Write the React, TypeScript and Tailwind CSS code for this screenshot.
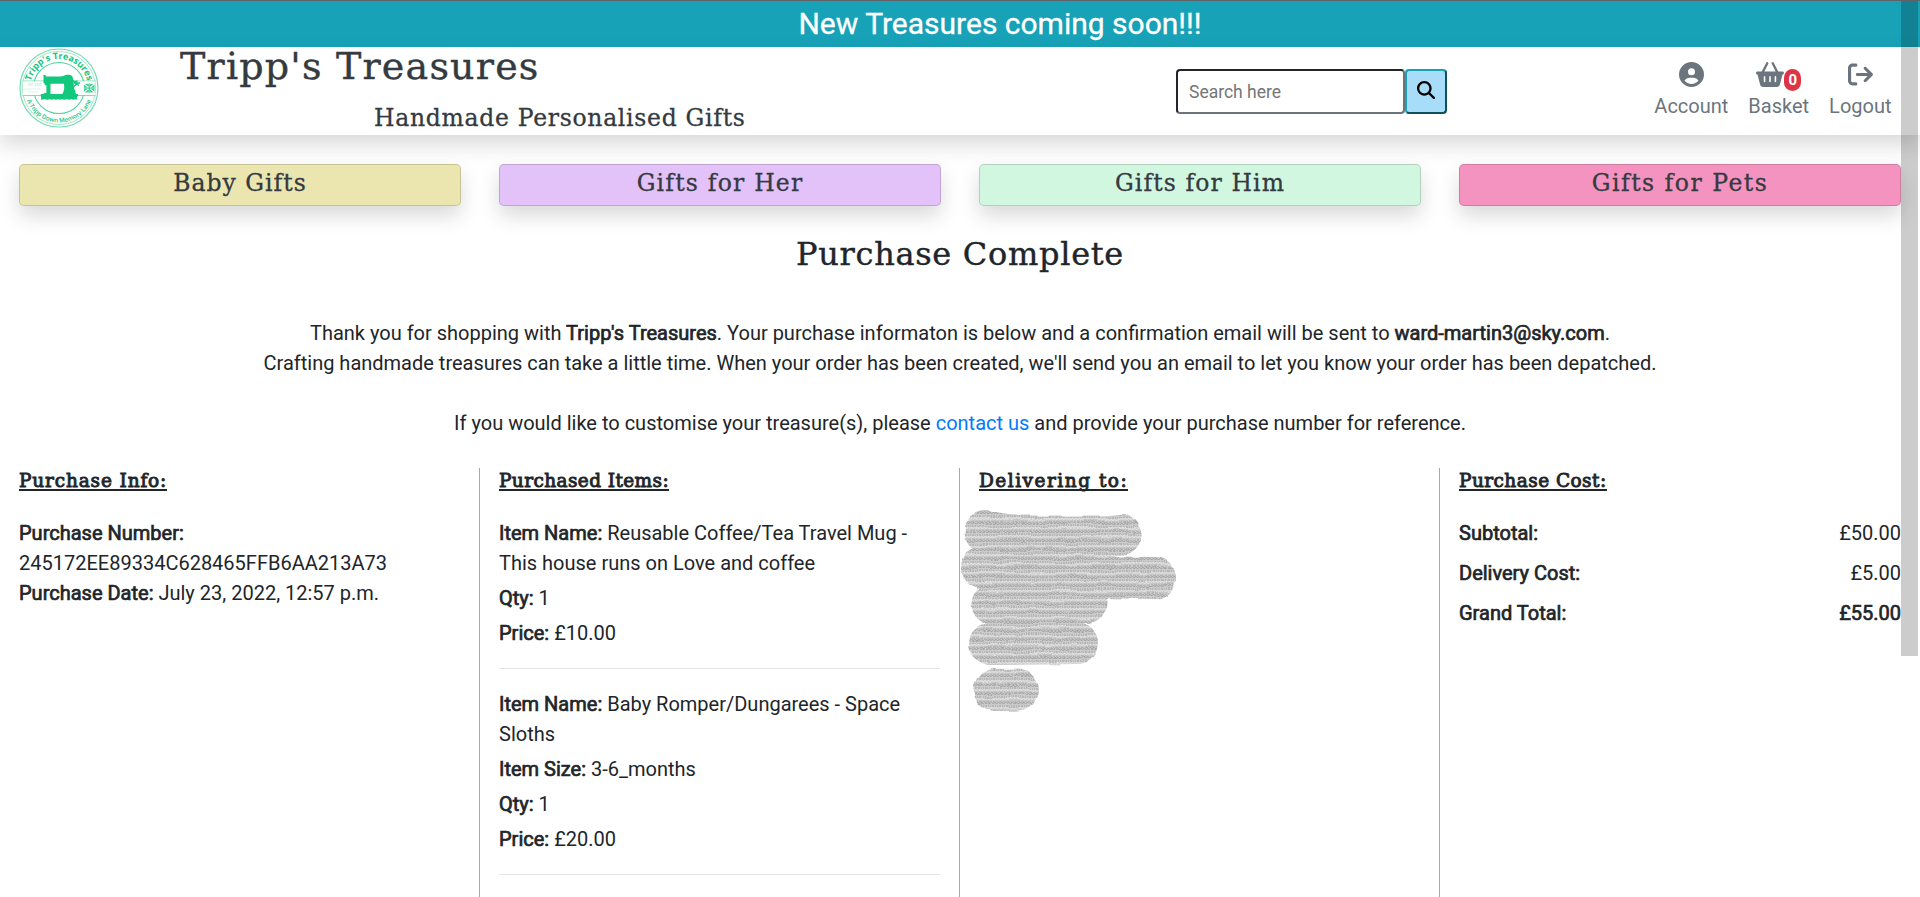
import type { ReactNode } from "react";
import { FaArrowRightFromBracket, FaBasketShopping, FaCircleUser, FaMagnifyingGlass } from "react-icons/fa6";

const typewriter = "font-['DejaVu_Serif',serif]";

function B({ children }: { children: ReactNode }) {
  return <span className="[-webkit-text-stroke:0.7px_#212529]">{children}</span>;
}

function Logo() {
  return (
    <svg viewBox="0 0 80 80" className="h-20 w-20" fill="none">
      <circle cx="40" cy="40" r="39" stroke="#6fdcae" strokeWidth="1.2" />
      <circle cx="40" cy="40" r="36.6" stroke="#8be3bf" strokeWidth="0.8" />
      <circle cx="40" cy="40" r="25.5" stroke="#4fd39b" strokeWidth="1.1" />
      <path d="M3.5 33h73M3.5 47.5h73" stroke="#6fdcae" strokeWidth="0.9" />
      <path d="M4 33.6h72v13.4H4z" fill="#fff" />
      <path id="arc-top" d="M11 40 A29 29 0 0 1 69 40" />
      <path id="arc-bottom" d="M5.500 40 A34.5 34.5 0 0 0 74.500 40" />
      <text fill="#14c67c" fontSize="9" fontWeight="700" className="font-['Open_Sans',sans-serif]">
        <textPath href="#arc-top" startOffset="50%" textAnchor="middle">Tripp's Treasures</textPath>
      </text>
      <text fill="#16c47c" fontSize="6.200" fontWeight="600" className="font-['Open_Sans',sans-serif]">
        <textPath href="#arc-bottom" startOffset="50%" textAnchor="middle">A Tripp Down Memory Lane</textPath>
      </text>
      <text x="9" y="37.5" fill="#8be3bf" fontSize="3" className="font-['Open_Sans',sans-serif]">EST. 2020</text>
      <path d="M5 41h17M9 44h11" stroke="#bff0db" strokeWidth="0.8" strokeDasharray="1.5 .6" />
      <path
        fill="#12c87c"
        d="M24.5 27h2.3v1.4h14.5c3 0 4-1.3 6-1.6 2.6-.4 5.4 0 6.2 1.9.5 1.2.4 2.4.8 4.4l.8 6.7c.3 2.4 1 4.4 2 6.2h2v2.4H21.8v-2.4h3V45h2.6v-7.7h-1.7v-2h-1.2zM31.5 35.8V46h11.8c1.6-2.5 2.4-5.5 1.7-10.2z"
        fillRule="evenodd"
      />
      <path fill="#12c87c" d="M22 47.5h36v4.3c-1.2-.9-2.6-.9-3.8 0-1.4-.9-3-.9-4.2 0-1.5-.9-3-.9-4.4 0-1.4-.9-3-.9-4.4 0-1.4-.9-2.8-.9-4.2 0-1.4-.9-3-.9-4.4 0-1.4-.9-2.8-.9-4.2 0-1.5-.9-4.3-.9-6.4 0z" />
      <path d="M53.5 31.5l2 2.5 3-1M54.5 35h6.5M55 38.5l2.4-2.5 2.6 1.5M54.5 42l2 1.5" stroke="#12c87c" strokeWidth="1.4" />
      <path fill="#3ad092" d="M65 35.8h10.5v8.6H65z" />
      <path d="M65 35.8l10.5 8.6M75.5 35.8L65 44.4M70.2 35.6v9M65 40.1h10.5" stroke="#fff" strokeWidth="1.1" />
      <path d="M70.2 35.6v9M65 40.1h10.5" stroke="#12c87c" strokeWidth="0.9" />
    </svg>
  );
}

const categories = [
  { label: "Baby Gifts", color: "bg-[#ebe6b0]", track: "tracking-[1px]" },
  { label: "Gifts for Her", color: "bg-[#e3c1f9]", track: "tracking-[1.2px]" },
  { label: "Gifts for Him", color: "bg-[#d2f7e1]", track: "tracking-[1.1px]" },
  { label: "Gifts for Pets", color: "bg-[#f593c0]", track: "tracking-[1.5px]" },
];

const items = [
  { name: "Reusable Coffee/Tea Travel Mug - This house runs on Love and coffee", size: "", price: "£10.00" },
  { name: "Baby Romper/Dungarees - Space Sloths", size: "3-6_months", price: "£20.00" },
];

function ColumnTitle({ children, track }: { children: ReactNode; track: string }) {
  return (
    <div className="h-[50px]">
      <h2 className={`${typewriter} ${track} block w-fit border-b-2 border-[#212529] pt-[4px] text-[18.500px] leading-[17px] whitespace-nowrap [-webkit-text-stroke:0.9px_#212529]`}>
        {children}
      </h2>
    </div>
  );
}

function Redaction() {
  return (
    <svg className="absolute top-[40px] left-0 h-[206px] w-[220px]" viewBox="960 508 220 206" fill="none">
      <defs>
        <pattern id="scribble" width="7" height="9" patternUnits="userSpaceOnUse">
          <rect width="7" height="9" fill="#cbcbcb" />
          <path d="M0 1.5l2-1 1.5 1 2-1 1.5 1" stroke="#909090" strokeWidth="0.8" />
          <path d="M0 4h7" stroke="#a2a2a2" strokeWidth="0.9" strokeDasharray="1 1" />
          <path d="M0 6.5l1.5-1 2 1 1.5-1 2 1" stroke="#ececec" strokeWidth="0.8" />
          <path d="M0 8.3h7" stroke="#a8a8a8" strokeWidth="0.8" strokeDasharray="2 1" />
        </pattern>
        <filter id="warp" filterUnits="userSpaceOnUse" x="955" y="503" width="230" height="216">
          <feTurbulence type="fractalNoise" baseFrequency="0.04 0.1" numOctaves="2" seed="4" result="n" />
          <feDisplacementMap in="SourceGraphic" in2="n" scale="4" xChannelSelector="R" yChannelSelector="G" />
        </filter>
      </defs>
      <g stroke="url(#scribble)" strokeLinecap="round" strokeLinejoin="round" filter="url(#warp)">
        <path d="M985 531.5Q1000 536 1020 536H1095Q1108 536 1121 534.5" strokeWidth="41" />
        <path d="M982 567Q1010 577 1040 576L1155 578" strokeWidth="42" />
        <path d="M992 604L1087 602.500" strokeWidth="41" />
        <path d="M990 644L1077 643" strokeWidth="42" />
        <path d="M994.500 690L1017 689.500" strokeWidth="42" />
      </g>
    </svg>
  );
}

export default function App() {
  return (
    <div className="relative h-[897px] w-full overflow-hidden bg-white font-['Roboto',sans-serif] text-[20px] leading-[30px] text-[#212529]">
      <div className="flex h-[47px] items-center justify-center border-t border-[#5f6368] bg-[#17a2b8] pl-[80px] text-[30px] leading-[36px] font-normal text-white">
        <span className="[-webkit-text-stroke:0.3px_#ffffff]">New Treasures coming soon!!!</span>
      </div>

      <header className="flex h-[88px] bg-white shadow-[0_10px_20px_rgba(0,0,0,0.15)]">
        <div className="w-[180px] pt-px pl-[19px]">
          <Logo />
        </div>
        <div className="w-[996px] text-[#343a40]">
          <h1 className={`${typewriter} h-[57px] text-[38px] leading-[39px] tracking-[1.2px] whitespace-nowrap [-webkit-text-stroke:0.4px_#343a40]`}>Tripp's Treasures</h1>
          <p className={`${typewriter} pl-[194px] text-[23.500px] leading-[28px] tracking-[0.7px] whitespace-nowrap [-webkit-text-stroke:0.3px_#343a40]`}>Handmade Personalised Gifts</p>
        </div>
        <form className="mt-[22px] flex h-[45px]">
          <input
            placeholder="Search here"
            className="w-[229px] rounded-[4px] border-2 border-t-[#212529] border-r-[#6c757d] border-b-[#6c757d] border-l-[#212529] px-[11px] text-[17.500px] placeholder:text-[#757575]"
          />
          <button
            type="button"
            aria-label="Search"
            className="flex w-[42px] items-center justify-center rounded-[4px] border-2 border-t-[#17a2b8] border-r-[#0c525d] border-b-[#0c525d] border-l-[#17a2b8] bg-[#a8ddf9] pb-[3px] text-[18px] text-black"
          >
            <FaMagnifyingGlass />
          </button>
        </form>
        <nav className="ml-auto flex gap-[20px] pt-[15px] pr-[28.500px] text-[#6c757d]">
          <a className="flex flex-col items-center">
            <FaCircleUser className="h-[25px] w-[25px]" />
            <span className="mt-1">Account</span>
          </a>
          <a className="flex flex-col items-center">
            <span className="flex h-[25px]">
              <FaBasketShopping className="h-[25px] w-[28px]" />
              <span className="mt-[7px] flex h-[22px] w-[17px] items-center justify-center rounded-full bg-[#dc3545] text-[15px] leading-[15px] font-bold text-white">0</span>
            </span>
            <span className="mt-1">Basket</span>
          </a>
          <a className="flex flex-col items-center">
            <FaArrowRightFromBracket className="h-[25px] w-[25px]" />
            <span className="mt-1">Logout</span>
          </a>
        </nav>
      </header>

      <div className="mt-[29px] grid grid-cols-4">
        {categories.map((c) => (
          <div key={c.label} className="px-[19px]">
            <div className={`${typewriter} ${c.color} ${c.track} h-[42px] rounded-[5px] border border-black/15 pt-[3px] text-center text-[23.500px] leading-[30px] whitespace-nowrap text-[#343a40] shadow-[0_10px_20px_rgba(0,0,0,0.15)] [-webkit-text-stroke:0.3px_#343a40]`}>
              {c.label}
            </div>
          </div>
        ))}
      </div>

      <h2 className={`${typewriter} mt-[28px] h-[84px] text-center text-[32px] leading-[40px] tracking-[0.7px] [-webkit-text-stroke:0.4px_#212529]`}>Purchase Complete</h2>

      <div className="text-center">
        <p>
          Thank you for shopping with <B>Tripp's Treasures</B>. Your purchase informaton is below and a confirmation email will be sent to <B>ward-martin3@sky.com</B>.
        </p>
        <p>Crafting handmade treasures can take a little time. When your order has been created, we'll send you an email to let you know your order has been depatched.</p>
        <p className="mt-[30px]">
          If you would like to customise your treasure(s), please <a className="text-[#007bff]">contact us</a> and provide your purchase number for reference.
        </p>
      </div>

      <div className="mt-[30px] grid h-[600px] grid-cols-4">
        <section className="border-r border-[#a8a8a8] px-[19px]">
          <ColumnTitle track="tracking-[0.85px]">Purchase Info:</ColumnTitle>
          <p><B>Purchase Number:</B></p>
          <p>245172EE89334C628465FFB6AA213A73</p>
          <p><B>Purchase Date:</B> July 23, 2022, 12:57 p.m.</p>
        </section>

        <section className="border-r border-[#a8a8a8] px-[19px]">
          <ColumnTitle track="tracking-[0.4px]">Purchased Items:</ColumnTitle>
          {items.map((item) => (
            <div key={item.name} className="mb-[20px] flex flex-col gap-[5px] border-b border-[#e5e5e5] pb-[20px]">
              <p><B>Item Name:</B> {item.name}</p>
              {item.size && <p><B>Item Size:</B> {item.size}</p>}
              <p><B>Qty:</B> 1</p>
              <p><B>Price:</B> {item.price}</p>
            </div>
          ))}
        </section>

        <section className="relative border-r border-[#a8a8a8] px-[19px]">
          <ColumnTitle track="tracking-[1.5px]">Delivering to:</ColumnTitle>
          <Redaction />
        </section>

        <section className="px-[19px]">
          <ColumnTitle track="tracking-[0.45px]">Purchase Cost:</ColumnTitle>
          <div className="flex flex-col gap-[10px]">
            <p className="flex justify-between"><B>Subtotal:</B><span>£50.00</span></p>
            <p className="flex justify-between"><B>Delivery Cost:</B><span>£5.00</span></p>
            <p className="flex justify-between"><B>Grand Total:</B><B>£55.00</B></p>
          </div>
        </section>
      </div>

      <div className="absolute top-px right-[2px] h-[655px] w-[17px] bg-black/20" />
    </div>
  );
}
